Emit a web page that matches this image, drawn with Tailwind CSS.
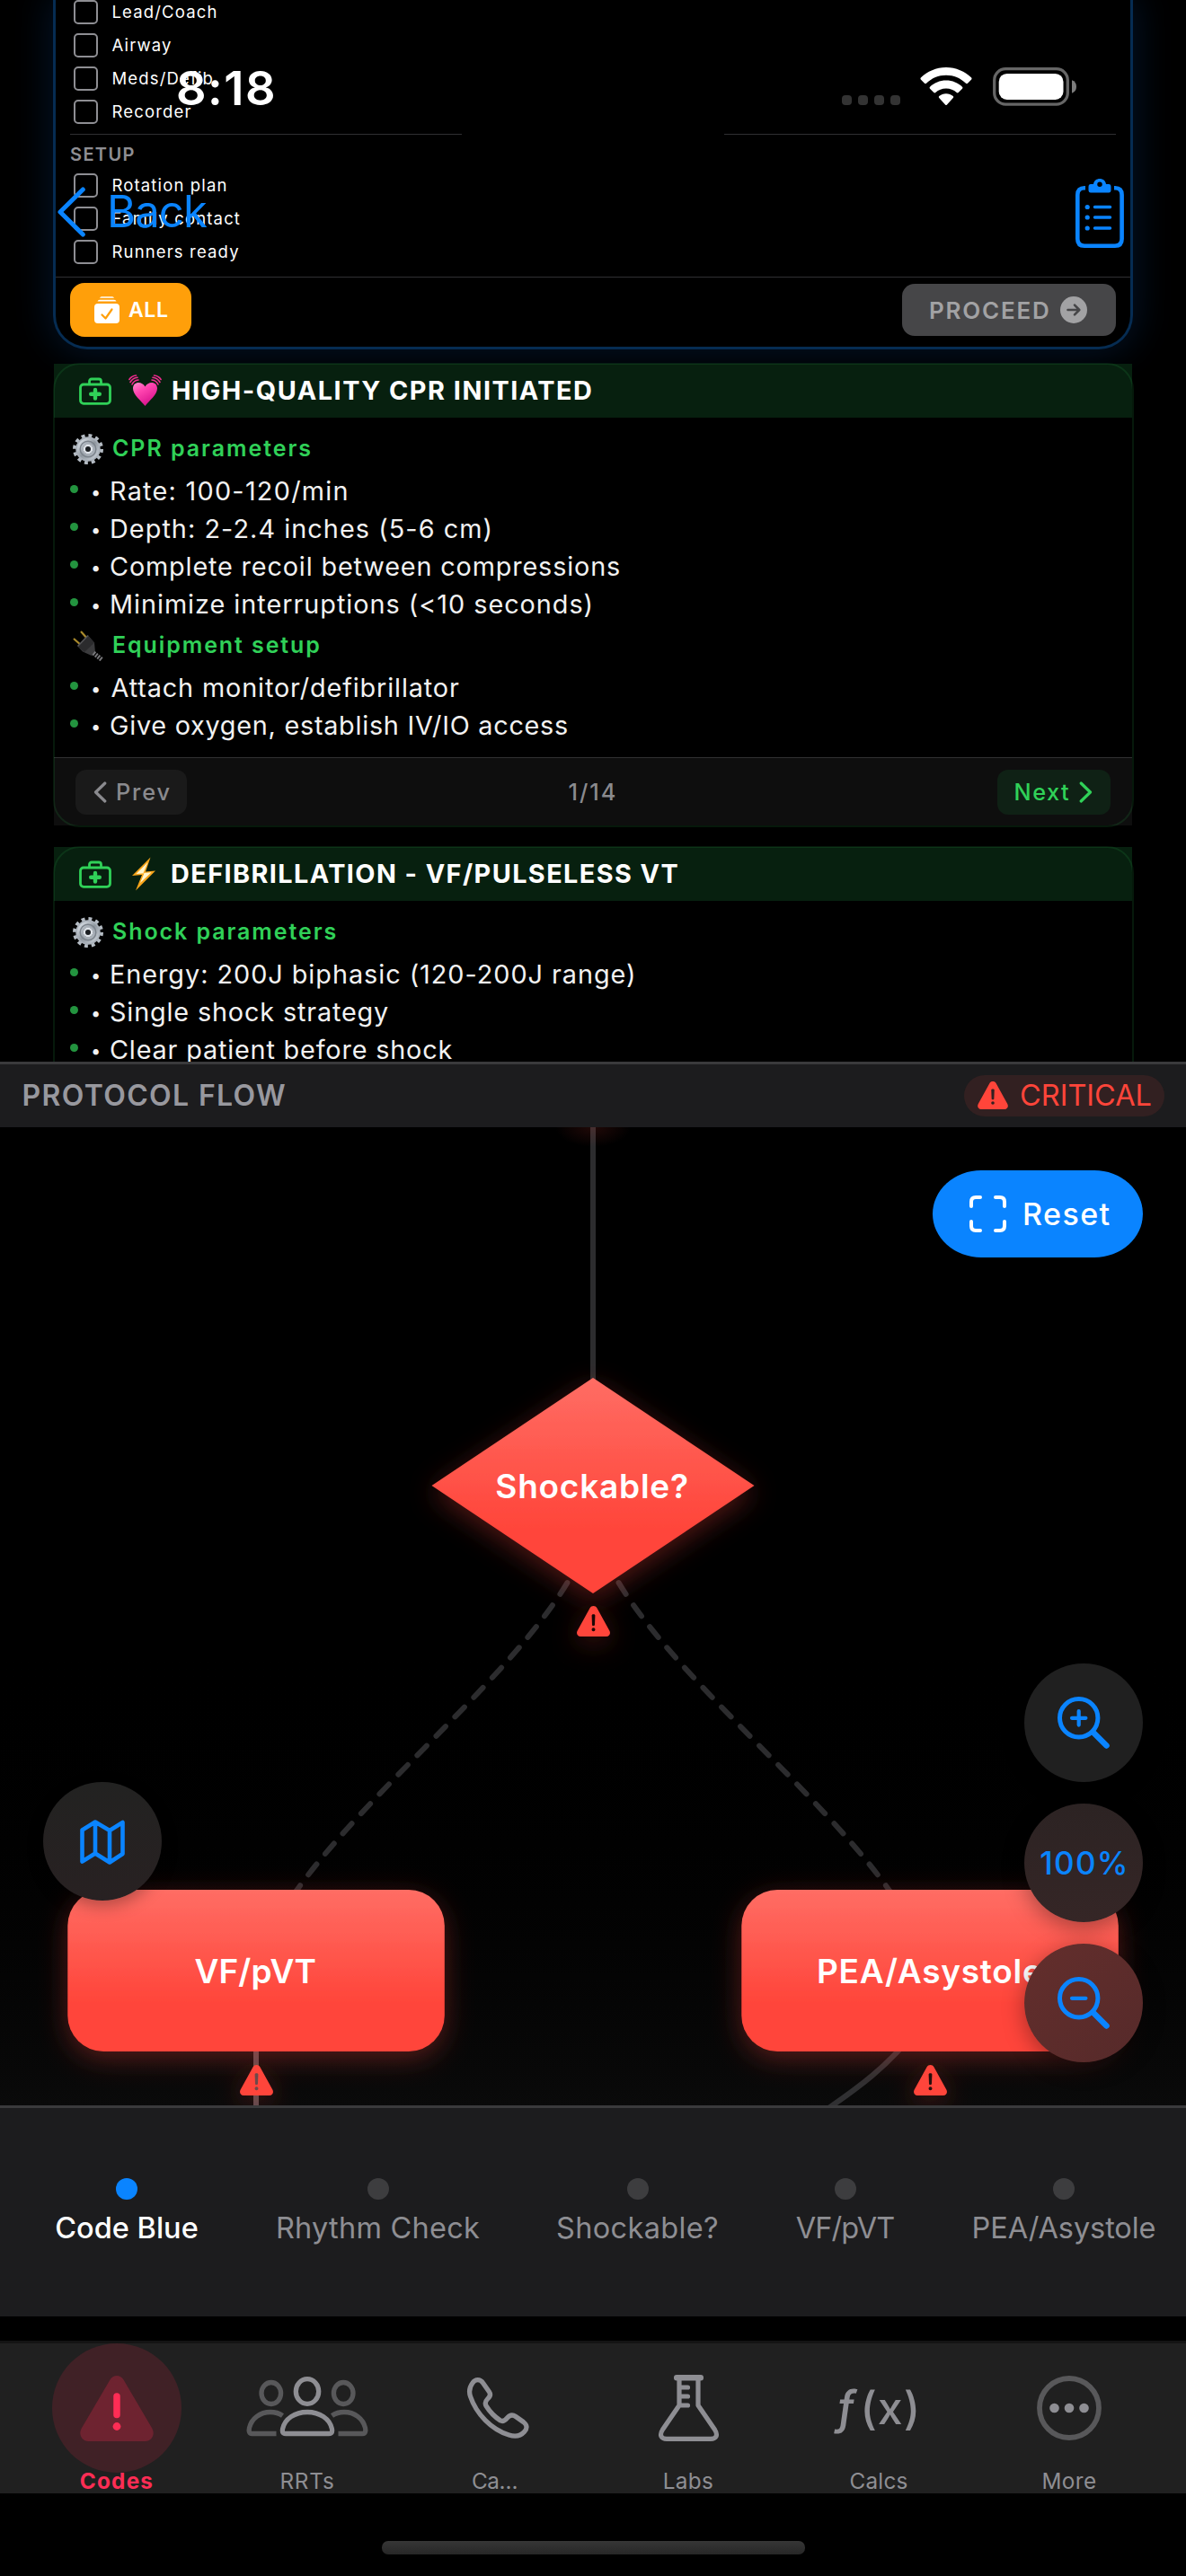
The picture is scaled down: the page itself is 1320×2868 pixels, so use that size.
<!DOCTYPE html>
<html lang="en">
<head>
<meta charset="utf-8">
<title>Code Blue Protocol</title>
<script src="https://cdn.jsdelivr.net/npm/@tailwindcss/browser@4"></script>
</head>
<body class="bg-black">
<!-- shared symbols -->
<svg class="absolute size-0">
  <linearGradient id="metal" x1="0" y1="0" x2="1" y2="1"><stop offset="0" stop-color="#d9dfe6"/><stop offset=".5" stop-color="#8f979f"/><stop offset="1" stop-color="#c3cad2"/></linearGradient>
  <symbol id="warn" viewBox="0 0 37 34"><path fill-rule="evenodd" d="M14.600 2.200C16.300-.7 20.700-.7 22.400 2.200L36.300 27.500C38 30.600 36.300 34 32.800 34H4.200C.7 34-1 30.600.7 27.500ZM16.600 10.500L17 21C17.100 22.600 19.900 22.600 20 21L20.400 10.500C20.400 8.900 16.600 8.900 16.600 10.500ZM18.500 24.300A2 2 0 1 0 18.500 28.300A2 2 0 1 0 18.500 24.300Z" fill="#ff453a"/></symbol>
  <symbol id="kit" viewBox="0 0 36 31"><g fill="none" stroke="#30d158" stroke-width="2.800"><rect x="1.500" y="8" width="33" height="21.300" rx="3.500"/><path d="M11.500 8V4.500Q11.500 2 14 2H22Q24.500 2 24.500 4.500V8"/></g><path d="M18 14V23.500M13.200 18.700H22.800" stroke="#30d158" stroke-width="4.400" stroke-linecap="round"/></symbol>
  <symbol id="gear" viewBox="0 0 34 34"><circle cx="17" cy="17" r="15" fill="none" stroke="#b4bbc3" stroke-width="4" stroke-dasharray="3.900 3.954"/><circle cx="17" cy="17" r="9.500" fill="none" stroke="#a9b0b9" stroke-width="8.500"/><circle cx="17" cy="17" r="9.500" fill="none" stroke="url(#metal)" stroke-width="5"/><circle cx="17" cy="17" r="8.800" fill="none" stroke="#7b828b" stroke-width="1.400"/><circle cx="17" cy="17" r="4.200" fill="#1b1e22" stroke="#dfe4ea" stroke-width="2.400"/></symbol>
</svg>

<main class="relative flex flex-col w-[1320px] h-[2868px] overflow-hidden bg-black font-['Inter',sans-serif] text-white whitespace-nowrap">

  <!-- scrolling protocol cards -->
  <section class="relative h-[1182px] shrink-0 overflow-hidden">
    <div class="mx-[59px] flow-root h-[388.500px] rounded-b-[38px] border-[3px] border-t-0 border-[#062c52] bg-black shadow-[0_0_40px_4px_rgba(10,70,140,0.28)] text-[18.500px] tracking-[1.150px]">
      <div class="-mt-[5px] pl-5">
        <div class="flex h-[37px] items-center gap-[15.500px]"><i class="size-[27px] rounded-[5px] border-[2.500px] border-[#8e8e93]"></i>Lead/Coach</div>
        <div class="flex h-[37px] items-center gap-[15.500px]"><i class="size-[27px] rounded-[5px] border-[2.500px] border-[#8e8e93]"></i>Airway</div>
        <div class="flex h-[37px] items-center gap-[15.500px]"><i class="size-[27px] rounded-[5px] border-[2.500px] border-[#8e8e93]"></i>Meds/Defib</div>
        <div class="flex h-[37px] items-center gap-[15.500px]"><i class="size-[27px] rounded-[5px] border-[2.500px] border-[#8e8e93]"></i>Recorder</div>
      </div>
      <div class="mx-4 mt-[6px] flex justify-between"><i class="h-px w-[436px] bg-[#303032]"></i><i class="h-px w-[436px] bg-[#303032]"></i></div>
      <div class="mt-[6px] flex h-8 items-center pl-4 text-[20px] font-semibold tracking-[1.370px] text-[#8e8e93]">SETUP</div>
      <div class="pl-5">
        <div class="flex h-[37px] items-center gap-[15.500px]"><i class="size-[27px] rounded-[5px] border-[2.500px] border-[#8e8e93]"></i>Rotation plan</div>
        <div class="flex h-[37px] items-center gap-[15.500px]"><i class="size-[27px] rounded-[5px] border-[2.500px] border-[#8e8e93]"></i>Family contact</div>
        <div class="flex h-[37px] items-center gap-[15.500px]"><i class="size-[27px] rounded-[5px] border-[2.500px] border-[#8e8e93]"></i>Runners ready</div>
      </div>
      <div class="mt-[9px] h-px bg-[#303032]"></div>
      <div class="flex h-[72px] items-center justify-between px-4">
        <div class="flex h-[60px] w-[135px] items-center rounded-[16px] bg-[#ff9f0a] pl-[27px] text-[23px] font-semibold tracking-[0.630px]">
          <svg class="mr-[10px] h-[30px] w-7" viewBox="0 0 28 30"><rect x="0" y="8" width="28" height="22" rx="4" fill="#fff"/><path d="M3.500 5.500Q4 3.800 6 3.800H22Q24 3.800 24.500 5.500ZM6 1.800Q6.500.3 8 .3H20Q21.500.3 22 1.800Z" fill="#fff"/><path d="M8.500 20.500L12.500 24.500L19.500 14.500" fill="none" stroke="#ff9f0a" stroke-width="2.200" stroke-linecap="round" stroke-linejoin="round"/></svg>ALL
        </div>
        <div class="flex h-[58px] w-[238px] items-center rounded-[14px] bg-[#464648] pl-[30px] text-[26px] font-semibold tracking-[1.770px] text-[#a2a2a4]">PROCEED
          <svg class="ml-[10px] size-[30px]" viewBox="0 0 30 30"><circle cx="15" cy="15" r="15" fill="#a2a2a4"/><path d="M8.500 15H21M16 9.700L21.300 15L16 20.300" fill="none" stroke="#464648" stroke-width="2.600" stroke-linecap="round" stroke-linejoin="round"/></svg>
        </div>
      </div>
    </div>

    <article class="relative mx-[60px] mt-[16.500px] h-[514px] bg-black">
      <header class="flex h-[60px] items-center bg-[#07200f] pl-7 text-[28.800px] font-bold tracking-[1.520px]">
        <svg class="h-[31px] w-9"><use href="#kit"/></svg>
        <svg class="ml-[19px] mr-[11px] h-[36px] w-[37px]" viewBox="0 0 37 36"><defs><linearGradient id="hp" x1="0" y1="0" x2=".6" y2="1"><stop offset="0" stop-color="#ff8fd0"/><stop offset=".4" stop-color="#ff45b0"/><stop offset="1" stop-color="#d8128c"/></linearGradient></defs><path d="M18.500 35C14 29 5 22.500 5 15.500C5 7.500 15 7 18.500 13.500C22 7 32 7.500 32 15.500C32 22.500 23 29 18.500 35Z" fill="url(#hp)"/><g fill="none" stroke="#f02a8e" stroke-width="1.600" stroke-linecap="round"><path d="M4 11Q6 6.500 11 6M2 8.500Q4.500 3.800 10 3.200M.9 5.500Q3.500 1.300 8.500 1M33 11Q31 6.500 26 6M35 8.500Q32.500 3.800 27 3.200M36.100 5.500Q33.500 1.300 28.500 1"/></g></svg>HIGH-QUALITY CPR INITIATED
      </header>
      <div class="h-[378px] pl-[18px] pt-[9.500px] text-[28.800px] text-[#f2f2f2]">
        <h3 class="flex h-[51px] items-center pl-[2.500px] text-[25px] font-semibold tracking-[1.950px] text-[#30d158]"><svg class="mr-[10.500px] size-[34px]"><use href="#gear"/></svg>CPR parameters</h3>
        <p class="flex h-[42px] items-center tracking-[1.270px]"><i class="-mt-1 size-[9px] rounded-full bg-[#23943f]"></i><b class="ml-3.5 mr-2.5 mt-0.5 w-[11px] text-center text-[20px] font-normal leading-none tracking-normal">•</b>Rate: 100-120/min</p>
        <p class="flex h-[42px] items-center tracking-[1.060px]"><i class="-mt-1 size-[9px] rounded-full bg-[#23943f]"></i><b class="ml-3.5 mr-2.5 mt-0.5 w-[11px] text-center text-[20px] font-normal leading-none tracking-normal">•</b>Depth: 2-2.4 inches (5-6 cm)</p>
        <p class="flex h-[42px] items-center tracking-[0.850px]"><i class="-mt-1 size-[9px] rounded-full bg-[#23943f]"></i><b class="ml-3.5 mr-2.5 mt-0.5 w-[11px] text-center text-[20px] font-normal leading-none tracking-normal">•</b>Complete recoil between compressions</p>
        <p class="flex h-[42px] items-center tracking-[0.980px]"><i class="-mt-1 size-[9px] rounded-full bg-[#23943f]"></i><b class="ml-3.5 mr-2.5 mt-0.5 w-[11px] text-center text-[20px] font-normal leading-none tracking-normal">•</b>Minimize interruptions (&lt;10 seconds)</p>
        <h3 class="flex h-[51px] items-center pl-[2.500px] text-[25px] font-semibold tracking-[1.910px] text-[#30d158]"><svg class="mr-[10.500px] size-[34px]" viewBox="0 0 34 34"><path d="M1 9L10 17M9 1L17 10" stroke="#a98a2c" stroke-width="2.200"/><path d="M17 5.500L24 13.500L25 24L21 28L11 23.500L5.500 17.500Z" fill="#3b3b3d"/><path d="M17 5.500L24 13.500L13 24L5.500 17.500Z" fill="#2b2b2d"/><path d="M17 5.500L5.500 17.500" stroke="#57575a" stroke-width="1.500"/><path d="M23 25L33 33" stroke="#77777a" stroke-width="5" stroke-dasharray="2 1.200"/></svg>Equipment setup</h3>
        <p class="flex h-[42px] items-center tracking-[0.870px]"><i class="-mt-1 size-[9px] rounded-full bg-[#23943f]"></i><b class="ml-3.5 mr-[11.500px] mt-0.5 w-[11px] text-center text-[20px] font-normal leading-none tracking-normal">•</b>Attach monitor/defibrillator</p>
        <p class="flex h-[42px] items-center tracking-[0.740px]"><i class="-mt-1 size-[9px] rounded-full bg-[#23943f]"></i><b class="ml-3.5 mr-2.5 mt-0.5 w-[11px] text-center text-[20px] font-normal leading-none tracking-normal">•</b>Give oxygen, establish IV/IO access</p>
      </div>
      <footer class="grid h-[76px] grid-cols-3 items-center border-t border-[#303032] bg-[#0e0e0e] px-6 text-[25.300px] font-medium text-[#8a8a8e]">
        <div class="flex h-[50px] w-[124px] items-center rounded-[12px] bg-[#1a1a1a] pl-5 tracking-[1.830px]"><svg class="mr-[10px] h-6 w-[15px]" viewBox="0 0 15 24"><path d="M12.800 2L2.500 12L12.800 22" fill="none" stroke="#8a8a8e" stroke-width="3.200" stroke-linecap="round" stroke-linejoin="round"/></svg>Prev</div>
        <span class="text-center tracking-[2px]">1/14</span>
        <div class="flex h-[50px] w-[126px] items-center justify-self-end rounded-[12px] bg-[#0f2115] pl-[18.500px] tracking-[1.500px] text-[#30d158]">Next<svg class="ml-[10px] h-6 w-[15px]" viewBox="0 0 15 24"><path d="M2.200 2L12.500 12L2.200 22" fill="none" stroke="#30d158" stroke-width="3.200" stroke-linecap="round" stroke-linejoin="round"/></svg></div>
      </footer>
      <div class="absolute -inset-[1.500px] rounded-[30px] border-[2.500px] border-[#30d158]/12"></div>
    </article>

    <article class="relative mx-[60px] mt-6 h-[514px] bg-black">
      <header class="flex h-[60px] items-center bg-[#07200f] pl-7 text-[28.800px] font-bold tracking-[1.430px]">
        <svg class="h-[31px] w-9"><use href="#kit"/></svg>
        <svg class="ml-[22px] mr-[16px] h-[38px] w-[28px]" viewBox="0 0 28 38"><path d="M21.500.5L1 21L12 20L5 37.500L27 15.500L16 16.500Z" fill="#f7a51b"/><path d="M18.500 6L5.500 19L14.500 18.300L10 29L22.500 17.300L13.500 18Z" fill="#fff6cf"/></svg>DEFIBRILLATION - VF/PULSELESS VT
      </header>
      <div class="pl-[18px] pt-[9.500px] text-[28.800px] text-[#f2f2f2]">
        <h3 class="flex h-[51px] items-center pl-[2.500px] text-[25px] font-semibold tracking-[1.920px] text-[#30d158]"><svg class="mr-[10.500px] size-[34px]"><use href="#gear"/></svg>Shock parameters</h3>
        <p class="flex h-[42px] items-center tracking-[0.970px]"><i class="-mt-1 size-[9px] rounded-full bg-[#23943f]"></i><b class="ml-3.5 mr-2.5 mt-0.5 w-[11px] text-center text-[20px] font-normal leading-none tracking-normal">•</b>Energy: 200J biphasic (120-200J range)</p>
        <p class="flex h-[42px] items-center tracking-[0.850px]"><i class="-mt-1 size-[9px] rounded-full bg-[#23943f]"></i><b class="ml-3.5 mr-2.5 mt-0.5 w-[11px] text-center text-[20px] font-normal leading-none tracking-normal">•</b>Single shock strategy</p>
        <p class="flex h-[42px] items-center tracking-[0.830px]"><i class="-mt-1 size-[9px] rounded-full bg-[#23943f]"></i><b class="ml-3.5 mr-2.5 mt-0.5 w-[11px] text-center text-[20px] font-normal leading-none tracking-normal">•</b>Clear patient before shock</p>
      </div>
      <div class="absolute -inset-[1.500px] rounded-[30px] border-[2.500px] border-[#30d158]/12"></div>
    </article>

    <!-- status bar over the content -->
    <div class="absolute left-[196px] top-[66px] flex h-16 items-center text-[52.500px] font-semibold tracking-[1.480px]">8:18</div>
    <div class="absolute right-[122px] top-[75px] flex h-[43px] items-start">
      <div class="mr-[22px] mt-[31px] flex gap-[6.500px]"><i class="h-[11px] w-[11.500px] rounded-[4px] bg-[#333]"></i><i class="h-[11px] w-[11.500px] rounded-[4px] bg-[#333]"></i><i class="h-[11px] w-[11.500px] rounded-[4px] bg-[#333]"></i><i class="h-[11px] w-[11.500px] rounded-[4px] bg-[#333]"></i></div>
      <svg class="mr-[23px] h-[43px] w-[58px]" viewBox="0 0 58 43"><g fill="#fff"><path d="M29 0C18 0 8 4.500.8 11.500Q0 12.500.8 13.500L5 17.800Q6 18.600 7 17.800C13 12 20.500 8.800 29 8.800S45 12 51 17.800Q52 18.600 53 17.800L57.200 13.500Q58 12.500 57.200 11.500C50 4.500 40 0 29 0Z"/><path d="M29 14.500C22 14.500 15.700 17.200 11 21.700Q10 22.700 11 23.700L15.300 28Q16.300 28.800 17.300 28C20.400 25.200 24.500 23.500 29 23.500S37.600 25.200 40.700 28Q41.700 28.800 42.700 28L47 23.700Q48 22.700 47 21.700C42.300 17.200 36 14.500 29 14.500Z"/><path d="M29 29.200C26 29.200 23.300 30.300 21.200 32.100Q20.200 33.100 21.200 34.100L28 41.500Q29 42.500 30 41.500L36.800 34.100Q37.800 33.100 36.800 32.100C34.700 30.300 32 29.200 29 29.200Z"/></g></svg>
      <svg class="h-[43px] w-[93px]" viewBox="0 0 93 43"><rect x="1.700" y="1.700" width="81.600" height="39.400" rx="12.500" fill="none" stroke="#666" stroke-width="3.300"/><rect x="6.700" y="6.900" width="71.800" height="29" rx="9" fill="#fff"/><path d="M88 14.300Q93 16 93 21.500T88 28.700Z" fill="#7d7d7d"/></svg>
    </div>

    <!-- navigation bar -->
    <div class="absolute left-[64px] top-[206px] flex h-[60px] items-center text-[49px] tracking-[-0.860px] text-[#0a84ff]">
      <svg class="mr-[24px] h-[56px] w-[31px]" viewBox="0 0 31 56"><path d="M28.300 3L3 28L28.300 53" fill="none" stroke="#0a84ff" stroke-width="5" stroke-linecap="round" stroke-linejoin="round"/></svg>Back
    </div>
    <svg class="absolute left-[1197px] top-[199px] h-[77px] w-[54px]" viewBox="0 0 54 77"><path d="M11 10.300H10Q2.300 10.300 2.300 18V67Q2.300 74.700 10 74.700H44Q51.600 74.700 51.600 67V18Q51.600 10.300 44 10.300H43" fill="none" stroke="#0a84ff" stroke-width="4.600"/><path fill-rule="evenodd" d="M17 6H20C21-2 33-2 34 6H37Q39.500 6 39.500 9V12.500Q39.500 15.500 37 15.500H17Q14.500 15.500 14.500 12.500V9Q14.500 6 17 6ZM27 3.500A2.700 2.700 0 1 0 27 9A2.700 2.700 0 1 0 27 3.500Z" fill="#0a84ff"/><path d="M21.500 31.500H38.500M21.500 43H38.500M21.500 55H38.500" stroke="#0a84ff" stroke-width="3.500" stroke-linecap="round"/><g fill="#0a84ff"><circle cx="13.200" cy="31.500" r="2.600"/><circle cx="13.200" cy="43" r="2.600"/><circle cx="13.200" cy="55" r="2.600"/></g></svg>
  </section>

  <!-- flow header -->
  <header class="flex h-[73px] shrink-0 items-center justify-between border-t-[3px] border-[#3a3a3c] bg-[#1c1c1e] pl-[24.500px] pr-6">
    <h2 class="text-[32px] font-semibold tracking-[1.360px] text-[#98989e]">PROTOCOL FLOW</h2>
    <div class="flex h-[46px] w-[223px] items-center rounded-full bg-[#322021] pl-[15px] text-[32.500px] text-[#ff453a]"><svg class="mb-px mr-[13px] h-[31px] w-[34px]"><use href="#warn"/></svg>CRITICAL</div>
  </header>

  <!-- flow diagram canvas -->
  <section class="relative h-[1089px] shrink-0 overflow-hidden bg-linear-to-b from-black from-50% to-[#0a0a0a]">
    <svg class="absolute inset-0 h-[1089px] w-[1320px] font-['Inter',sans-serif]" viewBox="0 1255 1320 1089">
      <defs>
        <linearGradient id="red" x1="0" y1="0" x2="0" y2="1"><stop offset="0" stop-color="#ff6d64"/><stop offset=".7" stop-color="#ff453a"/></linearGradient>
        <filter id="glow" x="-20%" y="-30%" width="140%" height="170%"><feDropShadow dx="0" dy="8" stdDeviation="15" flood-color="#ff453a" flood-opacity=".32"/></filter>
        <filter id="soft" x="-150%" y="-150%" width="400%" height="400%"><feDropShadow dx="0" dy="6" stdDeviation="15" flood-color="#ff453a" flood-opacity=".3"/></filter>
        <radialGradient id="spill"><stop offset="0" stop-color="#ff453a" stop-opacity=".13"/><stop offset="1" stop-color="#ff453a" stop-opacity="0"/></radialGradient>
      </defs>
      <g fill="none" stroke="#2c2c2e" stroke-width="6" stroke-linecap="round">
        <path d="M660 1250V1560"/>
        <path d="M660 1678C660 1833 285 2059 285 2214" stroke-dasharray="15 15"/>
        <path d="M660 1678C660 1833 1035 2059 1035 2214" stroke-dasharray="15 15"/>
        <path d="M285 2280V2360" stroke="#5c4a4d"/>
        <path d="M1010 2272C985 2301 962 2320 915 2352" stroke="#303032"/>
      </g>
      <ellipse cx="660" cy="1255" rx="42" ry="22" fill="url(#spill)"/>
      <path d="M660 1534L839.500 1654L660 1774L480.500 1654Z" fill="url(#red)" filter="url(#glow)"/>
      <rect x="75.300" y="2104" width="419.500" height="180" rx="40" fill="url(#red)" filter="url(#glow)"/>
      <rect x="825.300" y="2104" width="419.500" height="180" rx="40" fill="url(#red)" filter="url(#glow)"/>
      <g filter="url(#soft)"><use href="#warn" x="642" y="1788" width="37" height="34"/></g>
      <g filter="url(#soft)"><use href="#warn" x="267" y="2299" width="37" height="34"/></g>
      <g filter="url(#soft)"><use href="#warn" x="1017" y="2299" width="37" height="34"/></g>
      <g fill="#fff" font-size="37" font-weight="600">
        <text x="551.300" y="1667.500" letter-spacing=".77">Shockable?</text>
        <text x="216.500" y="2207.500" letter-spacing=".09">VF/pVT</text>
        <text x="909" y="2207.500" letter-spacing=".74">PEA/Asystole</text>
      </g>
    </svg>

    <button class="absolute left-[1038px] top-[48px] flex h-[97px] w-[234px] items-center rounded-[54px_/_48.500px] bg-[#0a84ff] pl-[41px] text-[34px] font-medium tracking-[1.440px]">
      <svg class="mr-[18px] size-[41px]" viewBox="0 0 41 41"><path d="M2 12V7Q2 2 7 2H12M29 2H34Q39 2 39 7V12M39 29V34Q39 39 34 39H29M12 39H7Q2 39 2 34V29" fill="none" stroke="#fff" stroke-width="4" stroke-linecap="round"/></svg>Reset
    </button>

    <button class="absolute left-12 top-[729px] flex size-[132px] items-center justify-center rounded-full bg-linear-to-b from-[#222221] to-[#282122] shadow-[0_6px_18px_rgba(0,0,0,0.3)]">
      <svg class="h-[56px] w-[50px]" viewBox="0 0 50 56"><path d="M2.500 15.500L17 6.500L33 16L47.500 7V42L33 51.500L17 41.500L2.500 50.500ZM17 7V41.500M33 16V51" fill="none" stroke="#0a84ff" stroke-width="4.600" stroke-linejoin="round"/></svg>
    </button>

    <div class="absolute left-[1140px] top-[597px] flex flex-col gap-6">
      <button class="flex size-[132px] items-center justify-center rounded-full bg-[#202020] shadow-[0_6px_24px_rgba(0,0,0,0.35)]"><svg class="-mt-px size-[58px]" viewBox="0 0 58 58"><g fill="none" stroke="#0a84ff" stroke-linecap="round"><circle cx="23.700" cy="23.800" r="21.200" stroke-width="5"/><path d="M39.500 39.500L54.500 54.500" stroke-width="6.500"/><path d="M23.700 16V31.600M16 23.800H31.400" stroke-width="4.200"/></g></svg></button>
      <button class="flex size-[132px] items-center justify-center rounded-full bg-linear-to-b from-[#2c2323] to-[#352626] pl-[2px] text-[35px] font-medium tracking-[1.200px] text-[#0a84ff] shadow-[0_6px_24px_rgba(0,0,0,0.35)]">100%</button>
      <button class="flex size-[132px] items-center justify-center rounded-full bg-linear-to-br from-[#632e2c] to-[#562a2a] shadow-[0_6px_24px_rgba(0,0,0,0.35)]"><svg class="-mt-px size-[58px]" viewBox="0 0 58 58"><g fill="none" stroke="#0a84ff" stroke-linecap="round"><circle cx="23.700" cy="23.800" r="21.200" stroke-width="5"/><path d="M39.500 39.500L54.500 54.500" stroke-width="6.500"/><path d="M16 23.800H31.400" stroke-width="4.200"/></g></svg></button>
    </div>
  </section>

  <!-- step strip -->
  <section class="flex h-[235px] shrink-0 gap-[84px] overflow-hidden border-t-[3px] border-[#3a3a3c] bg-[#1c1c1e] pl-[60px] pt-[78px] text-[32.500px] text-[#8e8e93]">
    <div class="flex w-[162px] shrink-0 flex-col items-center gap-3 font-medium text-white"><i class="size-6 rounded-full bg-[#0a84ff]"></i><span class="leading-10">Code Blue</span></div>
    <div class="flex w-[229px] shrink-0 flex-col items-center gap-3 tracking-[0.240px]"><i class="size-6 rounded-full bg-[#3d3d3f]"></i><span class="leading-10">Rhythm Check</span></div>
    <div class="flex w-[181px] shrink-0 flex-col items-center gap-3 tracking-[0.340px]"><i class="size-6 rounded-full bg-[#3d3d3f]"></i><span class="leading-10">Shockable?</span></div>
    <div class="flex w-[113px] shrink-0 flex-col items-center gap-3 tracking-[-0.900px]"><i class="size-6 rounded-full bg-[#3d3d3f]"></i><span class="leading-10">VF/pVT</span></div>
    <div class="flex w-[206px] shrink-0 flex-col items-center gap-3 tracking-[-0.090px]"><i class="size-6 rounded-full bg-[#3d3d3f]"></i><span class="leading-10">PEA/Asystole</span></div>
  </section>

  <div class="h-[27px] shrink-0"></div>
  <!-- tab bar -->
  <nav class="grid h-[170px] shrink-0 grid-cols-6 border-t-[3px] border-[#141414] bg-[#202020] px-6 text-[24.300px] text-[#8e8e93]">
    <div class="flex flex-col items-center font-bold tracking-[1.230px] text-[#ff2d55]">
      <div class="flex h-36 w-36 items-center justify-center rounded-full bg-[#402126]"><svg class="h-[73px] w-[82px]" viewBox="0 0 82 73"><path d="M33.500 4.500C36.800-1.500 45.200-1.500 48.500 4.500L80.500 59C83.800 65.500 80 73 72.500 73H9.500C2 73-1.800 65.500 1.500 59Z" fill="#6e2330"/><path d="M41 23V43.500" stroke="#ff2d55" stroke-width="7.500" stroke-linecap="round"/><circle cx="41" cy="56.500" r="4.400" fill="#ff2d55"/></svg></div>
      <span class="leading-[18px]">Codes</span>
    </div>
    <div class="flex flex-col items-center tracking-[0.780px]">
      <div class="flex h-36 items-center justify-center"><svg class="-mt-1 h-[70px] w-[138px]" viewBox="0 0 138 70"><g fill="none" stroke-width="5.300"><g stroke="#58585a"><ellipse cx="28.800" cy="20.500" rx="10.800" ry="12"/><ellipse cx="109.200" cy="20.500" rx="10.800" ry="12"/><path d="M34.500 65.500H7.500C4 65.500 3.800 62 4.500 59C7 48.500 16.500 41.500 28 41.500C33 41.500 38 43 41.500 45.500"/><path d="M103.500 65.500H130.500C134 65.500 134.200 62 133.500 59C131 48.500 121.500 41.500 110 41.500C105 41.500 100 43 96.500 45.500"/></g><g stroke="#8e8e93"><ellipse cx="69" cy="18.500" rx="12.700" ry="13.800"/><path d="M45 65.500C41 65.500 41 62.500 41.600 60C44 49 55 41.500 69 41.500C83 41.500 94 49 96.400 60C97 62.500 97 65.500 93 65.500Z"/></g></g></svg></div>
      <span class="leading-[18px]">RRTs</span>
    </div>
    <div class="flex flex-col items-center tracking-[-0.500px]">
      <div class="flex h-36 items-center justify-center"><svg class="size-[72px]" viewBox="0 0 72 72"><path d="M8 8C11 3.500 16.500 3.500 19.500 8L26.500 18C28.500 21 27.500 23.500 24.500 26C22 28.500 21.500 30.500 23 33.500C27 40 33 46 39 50C42 51.500 44 50 46.500 47C49.500 43.500 52.500 43 56 45.500L64.500 51.500C69 55 69 58.500 65.500 62.500C61 67.500 55 68 48.500 66C29 60 12 42.500 5.500 23C3.500 17 5 12 8 8Z" fill="none" stroke="#8e8e93" stroke-width="5.300"/></svg></div>
      <span class="-ml-[7px] leading-[18px]">Ca…</span>
    </div>
    <div class="flex flex-col items-center tracking-[0.410px]">
      <div class="flex h-36 items-center justify-center"><svg class="h-[78px] w-[71px]" viewBox="0 0 71 78"><path d="M25 8V36L6.500 63C2.500 69.500 5 73.300 11 73.300H60C66 73.300 68.500 69.500 64.500 63L46 36V8M25 16H34.500M25 26H34.500M25 36H34.500" fill="none" stroke="#8e8e93" stroke-width="5.200" stroke-linecap="round" stroke-linejoin="round"/><rect x="19" y="2" width="33" height="6.500" rx="3" fill="#8e8e93"/></svg></div>
      <span class="leading-[18px]">Labs</span>
    </div>
    <div class="flex flex-col items-center tracking-[0.210px]">
      <div class="flex h-36 items-center justify-center text-[50px] font-medium tracking-[1px]"><span class="mr-1 skew-x-[-8deg] text-[52px]">ƒ</span><span>(x)</span></div>
      <span class="leading-[18px]">Calcs</span>
    </div>
    <div class="flex flex-col items-center tracking-[0.410px]">
      <div class="flex h-36 items-center justify-center"><svg class="size-[72px]" viewBox="0 0 72 72"><circle cx="36" cy="36" r="33" fill="none" stroke="#58585a" stroke-width="5.800"/><g fill="#8e8e93"><circle cx="19.500" cy="36" r="5.300"/><circle cx="36" cy="36" r="5.300"/><circle cx="52.500" cy="36" r="5.300"/></g></svg></div>
      <span class="leading-[18px]">More</span>
    </div>
  </nav>
  <!-- home indicator -->
  <div class="mx-auto mt-[53px] h-[15px] w-[471px] shrink-0 rounded-[7px] bg-linear-to-b from-[#363636] to-[#272727]"></div>
</main>
</body>
</html>
